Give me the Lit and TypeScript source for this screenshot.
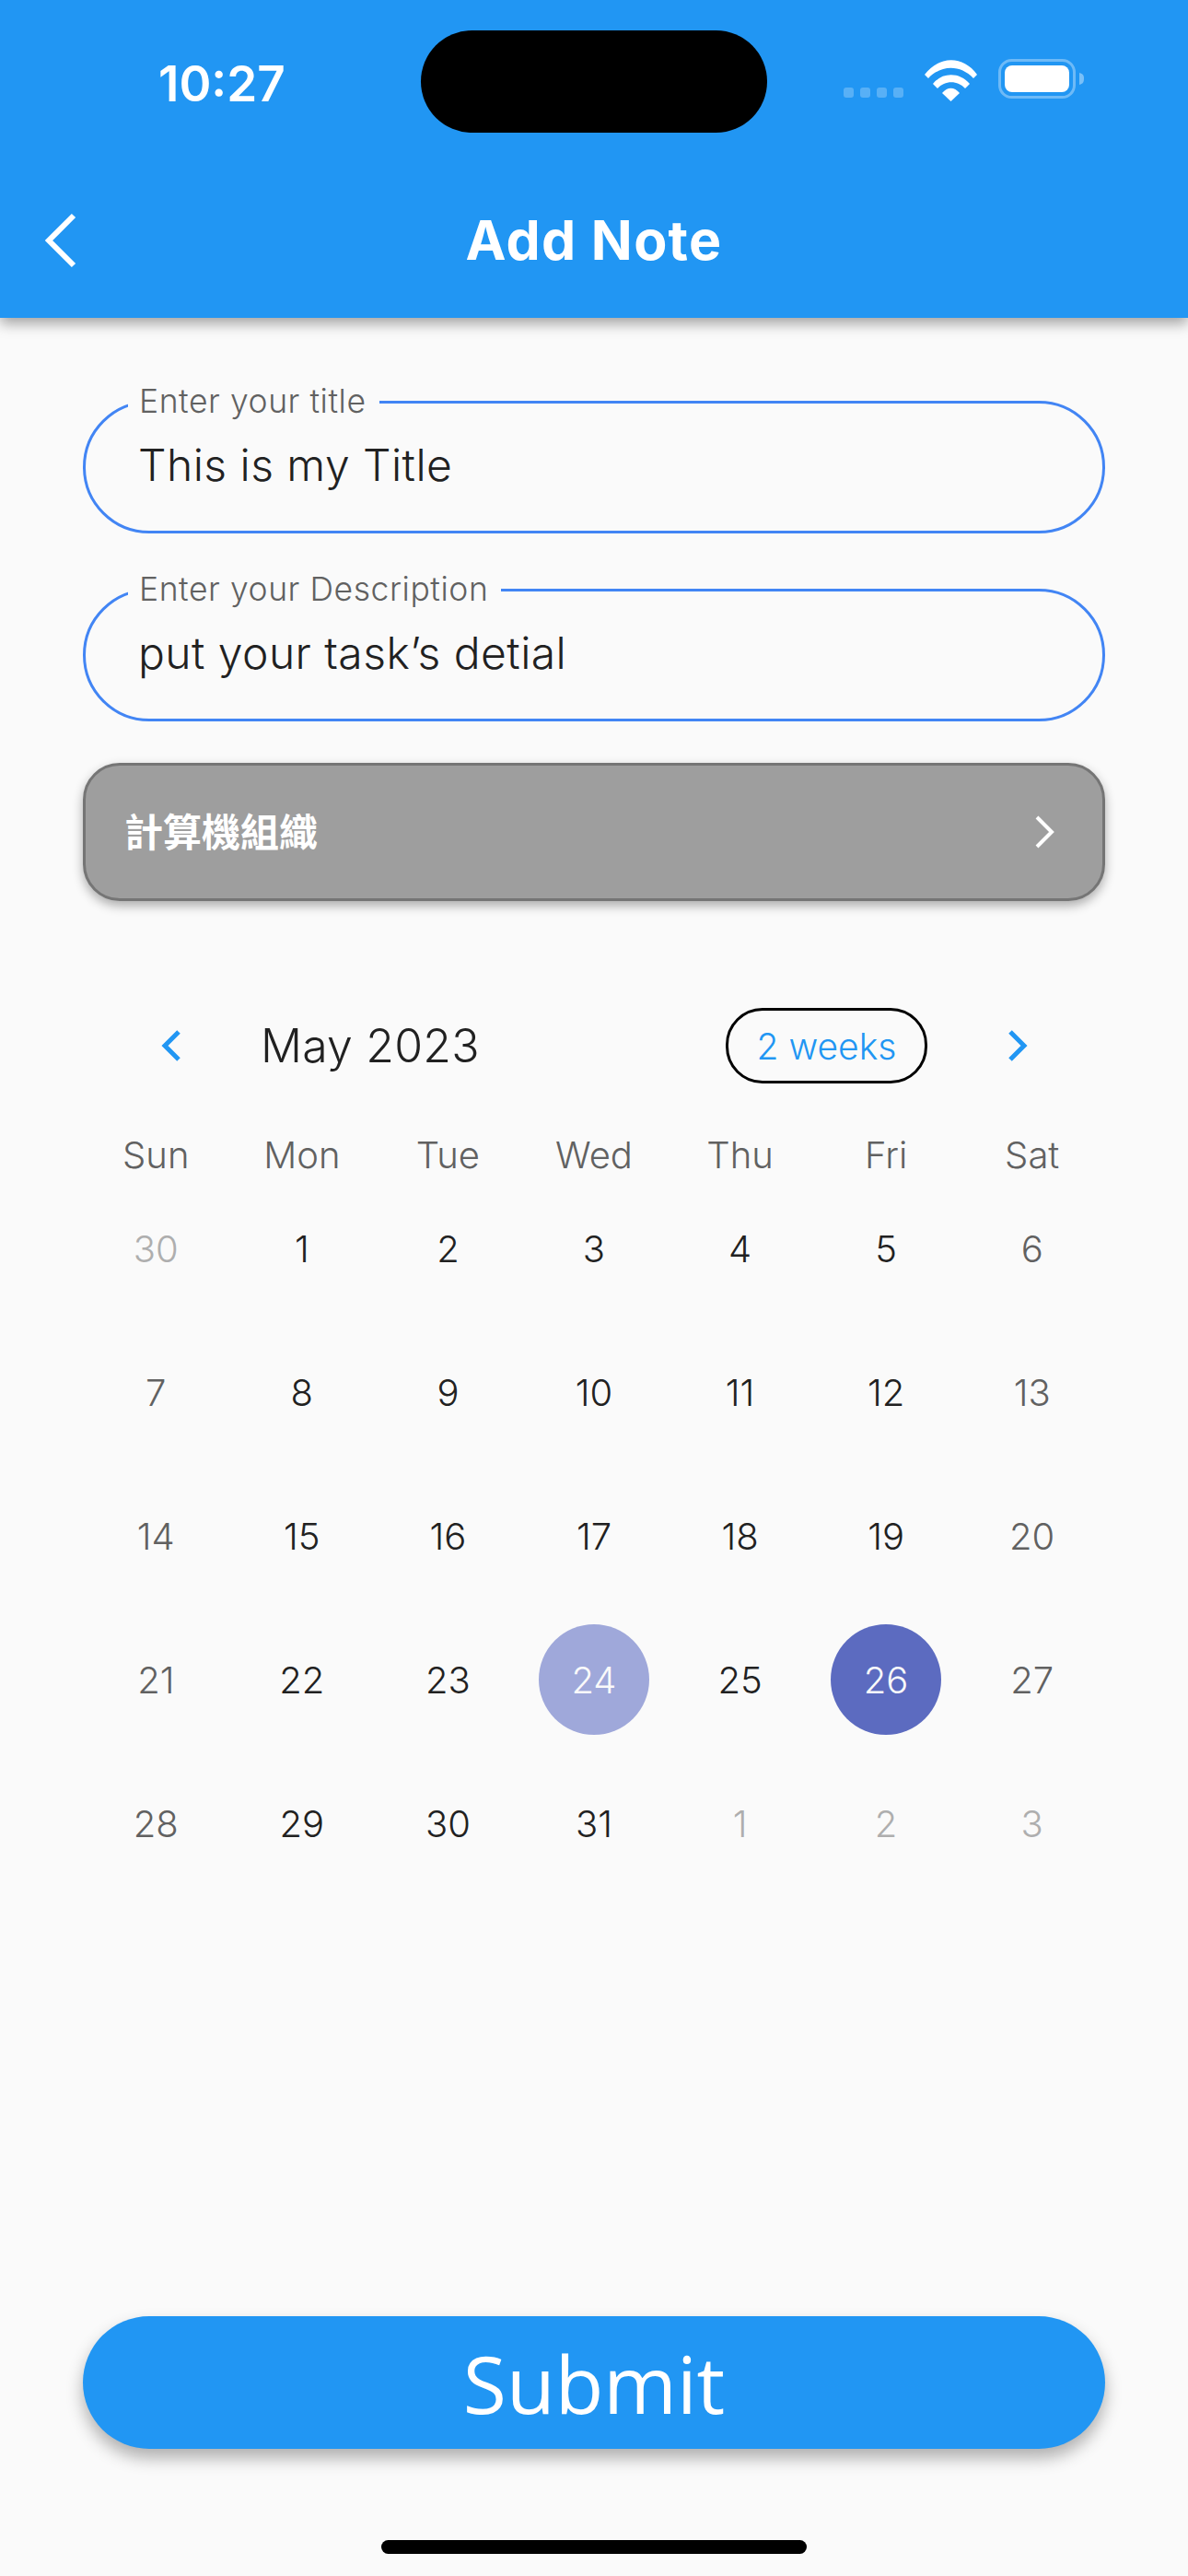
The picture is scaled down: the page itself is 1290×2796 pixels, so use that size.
import { LitElement, html, css } from 'lit';
import { customElement } from 'lit/decorators.js';
import { classMap } from 'lit/directives/class-map.js';

const weekdays = ['Sun', 'Mon', 'Tue', 'Wed', 'Thu', 'Fri', 'Sat'];

// leading 30 and trailing 1-3 belong to the neighbouring months
const days = [30, ...Array.from({ length: 31 }, (_, i) => i + 1), 1, 2, 3];

@customElement('app-root')
export class AppRoot extends LitElement {
  static styles = css`
    :host {
      display: flex;
      flex-direction: column;
      width: 1290px;
      height: 2796px;
      overflow: hidden;
      background: #fafafa;
      font-family: Inter, 'Noto Sans CJK TC', sans-serif;
      color: #212121;
    }

    .appbar {
      position: relative;
      height: 345px;
      box-sizing: border-box;
      flex: none;
      background: #2196f3;
      color: #fff;
      box-shadow: 0 6px 14px rgba(0, 0, 0, 0.36);
    }

    .status {
      display: flex;
      align-items: flex-start;
      height: 180px;
      box-sizing: border-box;
      padding: 60px 112px 0 172px;
    }

    .time {
      font-size: 53px;
      font-weight: 600;
      line-height: 62px;
    }

    .status-icons {
      display: flex;
      align-items: flex-start;
      margin-left: auto;
      padding-top: 4px;
    }

    .island {
      position: absolute;
      left: 457px;
      top: 33px;
      width: 376px;
      height: 111px;
      border-radius: 56px;
      background: #000;
    }

    .toolbar {
      display: flex;
      align-items: center;
      justify-content: center;
      height: 165px;
      padding-bottom: 4px;
      box-sizing: border-box;
      position: relative;
    }

    .toolbar svg {
      position: absolute;
      left: 46px;
      top: 49px;
    }

    .toolbar h1 {
      margin: 0;
      font-size: 59px;
      font-weight: 700;
      letter-spacing: 1.3px;
      line-height: 1;
    }

    .form {
      display: flex;
      flex-direction: column;
      padding: 0 90px;
      margin-top: 73px;
    }

    fieldset {
      margin: 0 0 43px;
      padding: 0 0 0 46px;
      height: 161px;
      box-sizing: border-box;
      border: 3px solid #4285f4;
      border-radius: 72px;
      min-width: 0;
    }

    fieldset + fieldset {
      margin-bottom: 0;
    }

    legend {
      margin-left: 0;
      padding: 0 14px 0 12px;
      font-size: 35.5px;
      font-weight: 350;
      line-height: 36px;
      color: #616161;
      letter-spacing: 0.55px;
    }

    .value {
      font-size: 48px;
      font-weight: 350;
      line-height: 58px;
      margin: 22px 0 0 11px;
      letter-spacing: 0.45px;
    }

    .dropdown {
      display: flex;
      align-items: center;
      justify-content: space-between;
      height: 150px;
      box-sizing: border-box;
      margin-top: 45px;
      padding: 0 51px 0 42px;
      background: #9e9e9e;
      border: 3px solid #757575;
      border-radius: 40px;
      box-shadow: 0 5px 12px rgba(0, 0, 0, 0.32);
      color: #fff;
      font-size: 42px;
      font-weight: 700;
    }

    .dropdown span {
      margin-top: -5px;
    }

    .calendar {
      margin-top: 116px;
    }

    .cal-header {
      display: flex;
      align-items: center;
      height: 82px;
      padding: 0 83px 0 84px;
    }

    .month {
      margin-left: 85px;
      font-size: 50px;
      font-weight: 350;
      letter-spacing: 0.2px;
    }

    .format {
      margin-left: auto;
      margin-right: 86px;
      width: 219px;
      height: 82px;
      box-sizing: border-box;
      display: flex;
      align-items: center;
      justify-content: center;
      border: 3px solid #000;
      border-radius: 40px;
      color: #2196f3;
      font-size: 39px;
      font-weight: 350;
    }

    .grid {
      display: grid;
      grid-template-columns: repeat(7, 1fr);
      grid-auto-rows: 156px;
    }

    .weekdays {
      grid-auto-rows: auto;
    }

    .weekday {
      display: flex;
      align-items: center;
      justify-content: center;
      height: 47px;
      margin-top: 54px;
      font-size: 40px;
      font-weight: 350;
      color: #616161;
    }

    .day {
      display: flex;
      align-items: center;
      justify-content: center;
      font-size: 40px;
      font-weight: 350;
    }

    .day span {
      display: flex;
      align-items: center;
      justify-content: center;
      width: 120px;
      height: 120px;
      border-radius: 50%;
    }

    .weekend {
      color: #616161;
    }

    .outside {
      color: #aeaeae;
    }

    .start span {
      background: #9fa8da;
      color: #fafafa;
    }

    .end span {
      background: #5c6bc0;
      color: #fafafa;
    }

    .footer {
      display: flex;
      flex-direction: column;
      margin-top: auto;
      padding: 0 90px 24px;
    }

    .submit {
      display: flex;
      align-items: center;
      justify-content: center;
      height: 144px;
      border-radius: 72px;
      background: #2196f3;
      color: #fff;
      font-family: 'Open Sans', sans-serif;
      font-size: 86px;
      box-shadow: 0 10px 18px rgba(0, 0, 0, 0.3);
    }

    .home {
      align-self: center;
      width: 462px;
      height: 15px;
      margin-top: 99px;
      border-radius: 8px;
      background: #000;
    }
  `;

  renderDay(day: number, index: number) {
    const classes = classMap({
      day: true,
      weekend: index % 7 === 0 || index % 7 === 6,
      outside: index === 0 || index > 31,
      start: index === 24,
      end: index === 26,
    });
    return html`<div class=${classes}><span>${day}</span></div>`;
  }

  renderStatusIcons() {
    return html`
      <div class="status-icons">
        <svg width="174" height="46" viewBox="0 0 174 46">
          <g fill="#fff" fill-opacity="0.25">
            <rect x="0" y="31" width="11" height="11" rx="3"></rect>
            <rect x="18" y="31" width="11" height="11" rx="3"></rect>
            <rect x="36" y="31" width="11" height="11" rx="3"></rect>
            <rect x="54" y="31" width="11" height="11" rx="3"></rect>
          </g>
          <path fill="#fff" d="M88 17 C104 -4 130 -4 145 17 L141 21 C127 6 106 6 92 21 Z"></path>
          <path fill="#fff" d="M97 27 C107 14 126 14 137 27 L132 32 C124 23 110 23 102 32 Z"></path>
          <path fill="#fff" d="M107 37 C113 30 120 30 126 37 L116.5 46 Z"></path>
        </svg>
        <svg width="94" height="46" viewBox="0 0 94 46" style="margin-left:-6px">
          <rect x="1.5" y="1.5" width="81" height="40" rx="13" fill="none" stroke="#fff" stroke-opacity="0.35" stroke-width="3"></rect>
          <rect x="7" y="7" width="70" height="29" rx="8" fill="#fff"></rect>
          <path d="M88 15 C92 16 93 18 93 21 C93 25 92 27 88 28 Z" fill="#fff" fill-opacity="0.4"></path>
        </svg>
      </div>
    `;
  }

  render() {
    return html`
      <header class="appbar">
        <div class="status">
          <div class="time">10:27</div>
          ${this.renderStatusIcons()}
        </div>
        <div class="island"></div>
        <div class="toolbar">
          <svg width="40" height="64" viewBox="0 0 40 64">
            <path d="M34 5 L7 32 L34 59" fill="none" stroke="#fff" stroke-width="6"></path>
          </svg>
          <h1>Add Note</h1>
        </div>
      </header>

      <div class="form">
        <fieldset>
          <legend>Enter your title</legend>
          <div class="value">This is my Title</div>
        </fieldset>
        <fieldset>
          <legend>Enter your Description</legend>
          <div class="value">put your task’s detial</div>
        </fieldset>
        <div class="dropdown">
          <span>計算機組織</span>
          <svg width="24" height="38" viewBox="0 0 24 38">
            <path d="M4 3 L20 19 L4 35" fill="none" stroke="#fff" stroke-width="4"></path>
          </svg>
        </div>

        <section class="calendar">
          <div class="cal-header">
            <svg width="24" height="36" viewBox="0 0 24 36">
              <path d="M20 3 L5 18 L20 33" fill="none" stroke="#2196f3" stroke-width="5"></path>
            </svg>
            <div class="month">May 2023</div>
            <div class="format">2 weeks</div>
            <svg width="24" height="36" viewBox="0 0 24 36">
              <path d="M4 3 L19 18 L4 33" fill="none" stroke="#2196f3" stroke-width="5"></path>
            </svg>
          </div>
          <div class="grid weekdays">
            ${weekdays.map((name) => html`<div class="weekday">${name}</div>`)}
          </div>
          <div class="grid">
            ${days.map((day, i) => this.renderDay(day, i))}
          </div>
        </section>
      </div>

      <div class="footer">
        <div class="submit">Submit</div>
        <div class="home"></div>
      </div>
    `;
  }
}
